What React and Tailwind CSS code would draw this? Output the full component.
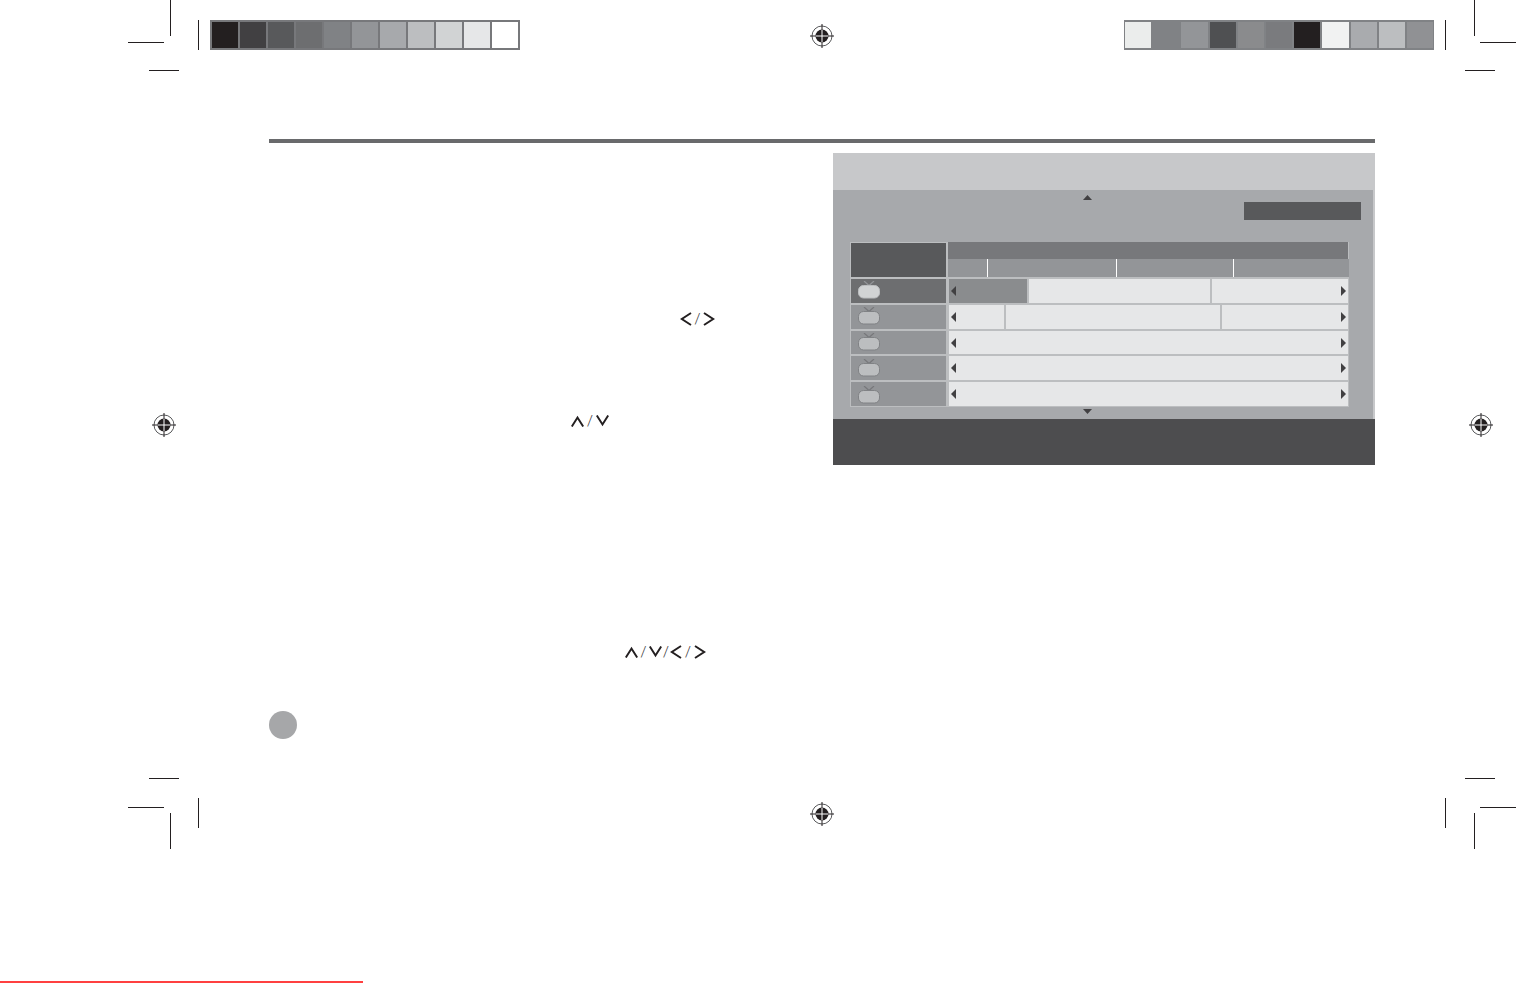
const leftBar = ['bg-[#231f20]', 'bg-[#414042]', 'bg-[#58595b]', 'bg-[#6d6e70]', 'bg-[#808285]', 'bg-[#939598]', 'bg-[#a7a9ac]', 'bg-[#bcbec0]', 'bg-[#d1d3d4]', 'bg-[#e6e7e8]', 'bg-white']
const rightBar = ['bg-[#ebedec]', 'bg-[#808285]', 'bg-[#939598]', 'bg-[#4f5052]', 'bg-[#8a8b8d]', 'bg-[#7a7b7e]', 'bg-[#231f20]', 'bg-[#f1f2f2]', 'bg-[#a9abae]', 'bg-[#bcbec0]', 'bg-[#909194]']

// Crop marks, each one placed on the print sheet
const cropMarks = [
  'left-[170px] top-0 w-px h-[36px]',
  'left-[128px] top-[42px] w-[36px] h-px',
  'left-[149px] top-[70px] w-[30px] h-px',
  'left-[198px] top-[20px] w-px h-[30px]',
  'left-[1445px] top-[20px] w-px h-[30px]',
  'left-[1474px] top-0 w-px h-[36px]',
  'left-[1480px] top-[42px] w-[36px] h-px',
  'left-[1465px] top-[70px] w-[30px] h-px',
  'left-[149px] top-[778px] w-[30px] h-px',
  'left-[128px] top-[807px] w-[36px] h-px',
  'left-[198px] top-[798px] w-px h-[30px]',
  'left-[170px] top-[813px] w-px h-[36px]',
  'left-[1465px] top-[778px] w-[30px] h-px',
  'left-[1445px] top-[798px] w-px h-[30px]',
  'left-[1480px] top-[807px] w-[36px] h-px',
  'left-[1474px] top-[813px] w-px h-[36px]',
]

const targets = [
  'left-[809px] top-[23px]',
  'left-[809px] top-[801px]',
  'left-[151px] top-[412px]',
  'left-[1468px] top-[412px]',
]

function Target({ className }) {
  return (
    <svg className={`absolute ${className}`} width="26" height="26" viewBox="0 0 26 26">
      <circle cx="13" cy="13" r="10" fill="none" stroke="#58595b" strokeWidth="1" />
      <circle cx="13" cy="13" r="6.5" fill="#231f20" />
      <path d="M13 6.5V19.5M6.5 13H19.5" stroke="#fff" strokeWidth="1" />
      <path d="M13 1V7M13 19V25M1 13H7M19 13H25" stroke="#231f20" strokeWidth="1" />
    </svg>
  )
}

const chevronPaths = {
  left: 'M11 1 1.8 7l9.2 6',
  right: 'M1 1l9.2 6L1 13',
  up: 'M0.8 11.5 6.5 2.5l5.7 9',
  down: 'M0.8 0.5 6.5 9.5l5.7-9',
}

function Chevron({ dir }) {
  const flat = dir === 'up' || dir === 'down'
  return (
    <svg width={flat ? 13 : 12} height={flat ? 12 : 14} viewBox={flat ? '0 0 13 12' : '0 0 12 14'} className="shrink-0">
      <path d={chevronPaths[dir]} fill="none" stroke="#231f20" strokeWidth="2" />
    </svg>
  )
}

function Slash({ className }) {
  return <span className={`text-center text-[15px] leading-none font-['Roboto',sans-serif] font-light text-[#414042] ${className}`}>/</span>
}

function Tv({ active }) {
  return (
    <svg width="22" height="18" viewBox="0 0 22 18" className="shrink-0">
      <path d="M11 4.5 6 0M11 4.5 16 0" stroke={active ? '#939598' : '#77787b'} strokeWidth="1.2" fill="none" />
      <rect x="0.5" y="4.5" width="21" height="12.5" rx="5" fill={active ? '#d1d3d4' : '#bcbec0'} stroke={active ? '#bcbec0' : '#808285'} />
    </svg>
  )
}

function TriLeft() {
  return (
    <svg width="5" height="10" viewBox="0 0 5 10" className="shrink-0">
      <path d="M5 0v10L0 5z" fill="#414042" />
    </svg>
  )
}

function TriRight() {
  return (
    <svg width="5" height="10" viewBox="0 0 5 10" className="shrink-0">
      <path d="M0 0v10l5-5z" fill="#414042" />
    </svg>
  )
}

const rows = [
  { h: 'h-[24px]', pad: 'pt-[2px]', active: true, cells: ['w-[78px] bg-[#8a8c8e]', 'w-[181px] bg-[#e6e7e8]', 'w-[136px] bg-[#e6e7e8]'] },
  { h: 'h-[24px]', pad: 'pt-[2px]', cells: ['w-[55px] bg-[#e6e7e8]', 'w-[214px] bg-[#e6e7e8]', 'w-[126px] bg-[#e6e7e8]'] },
  { h: 'h-[23px]', pad: 'pt-[2px]', cells: ['w-[399px] bg-[#e6e7e8]'] },
  { h: 'h-[24px]', pad: 'pt-[3px]', cells: ['w-[399px] bg-[#e6e7e8]'] },
  { h: 'h-[24px]', pad: 'pt-[4px]', cells: ['w-[399px] bg-[#e6e7e8]'] },
]

function GuidePanel() {
  return (
    <div className="w-[542px] flex flex-col shrink-0">
      <div className="h-[37px] bg-[#c7c8ca]" />
      <div className="h-[229px] bg-[#a7a9ac] border-r-2 border-[#c7c8ca] flex flex-col">
        <svg width="9" height="5" viewBox="0 0 9 5" className="ml-[250px] mt-[5px] shrink-0">
          <path d="M4.5 0 9 5H0z" fill="#414042" />
        </svg>
        <div className="flex justify-end pr-[12px] mt-[2px]">
          <div className="w-[117px] h-[18px] bg-[#58595b]" />
        </div>
        {/* Programme grid */}
        <div className="ml-[17px] mt-[22px] w-[499px] bg-[#bcbec0] flex flex-col gap-[2px] pb-px">
          <div className="flex">
            <div className="ml-px mt-px w-[95px] h-[34px] bg-[#58595b]" />
            <div className="ml-[2px] w-[401px] flex flex-col">
              <div className="w-[400px] h-[17px] bg-[#77787b]" />
              <div className="h-[18px] flex bg-[#939598]">
                <div className="w-[39px]" />
                <div className="w-px bg-white" />
                <div className="w-[128px]" />
                <div className="w-px bg-white" />
                <div className="w-[116px]" />
                <div className="w-px bg-white" />
              </div>
            </div>
          </div>
          {rows.map((row, i) => (
            <div key={i} className={`flex ${row.h}`}>
              <div className={`ml-px w-[95px] flex items-start pl-[7px] overflow-hidden ${row.pad} ${row.active ? 'bg-[#6d6e70]' : 'bg-[#939598]'}`}>
                <Tv active={row.active} />
              </div>
              <div className="ml-[3px] flex gap-[2px]">
                {row.cells.map((cell, j) => (
                  <div key={j} className={`flex items-center px-[2px] ${cell}`}>
                    {j === 0 && <TriLeft />}
                    <div className="flex-1" />
                    {j === row.cells.length - 1 && <TriRight />}
                  </div>
                ))}
              </div>
            </div>
          ))}
        </div>
        <svg width="9" height="5" viewBox="0 0 9 5" className="ml-[250px] mt-[2px] shrink-0">
          <path d="M0 0h9L4.5 5z" fill="#414042" />
        </svg>
      </div>
      <div className="h-[46px] bg-[#4d4d4f]" />
    </div>
  )
}

export default function App() {
  return (
    <div className="relative w-[1516px] h-[983px] overflow-hidden bg-white flex flex-col font-['Liberation_Sans',sans-serif]">
      {cropMarks.map(mark => (
        <div key={mark} className={`absolute bg-[#231f20] ${mark}`} />
      ))}
      {targets.map(t => (
        <Target key={t} className={t} />
      ))}

      {/* Colour bars */}
      <div className="mt-[20px] ml-[210px] w-[1224px] flex justify-between">
        <div className="h-[30px] flex gap-[2px] p-[2px] bg-[#77787b]">
          {leftBar.map(c => (
            <div key={c} className={`w-[26px] ${c}`} />
          ))}
        </div>
        <div className="h-[30px] flex gap-[2px] px-[1px] py-[2px] bg-[#808285] w-[310px]">
          {rightBar.map(c => (
            <div key={c} className={`flex-1 ${c}`} />
          ))}
        </div>
      </div>

      <div className="mt-[89px] ml-[269px] w-[1106px] h-[4px] bg-[#696a6c]" />

      <div className="mt-[10px] ml-[269px] flex">
        {/* Text column: only the key glyphs and the note bullet remain */}
        <div className="w-[564px] flex flex-col shrink-0">
          <div className="mt-[158px] ml-[411px] h-[16px] flex items-center">
            <Chevron dir="left" />
            <Slash className="w-[11px]" />
            <Chevron dir="right" />
          </div>
          <div className="mt-[86px] ml-[302px] h-[16px] flex items-center">
            <Chevron dir="up" />
            <Slash className="w-[12px]" />
            <Chevron dir="down" />
          </div>
          <div className="mt-[215px] ml-[356px] h-[16px] flex items-center">
            <Chevron dir="up" />
            <Slash className="w-[11px]" />
            <Chevron dir="down" />
            <Slash className="w-[8px]" />
            <Chevron dir="left" />
            <Slash className="w-[12px]" />
            <Chevron dir="right" />
          </div>
          <div className="mt-[51px] w-[28px] h-[28px] rounded-full bg-[#a6a7a9]" />
        </div>
        <GuidePanel />
      </div>

      <div className="absolute left-0 bottom-0 w-[363px] h-[2px] bg-[#ff4040]" />
    </div>
  )
}
